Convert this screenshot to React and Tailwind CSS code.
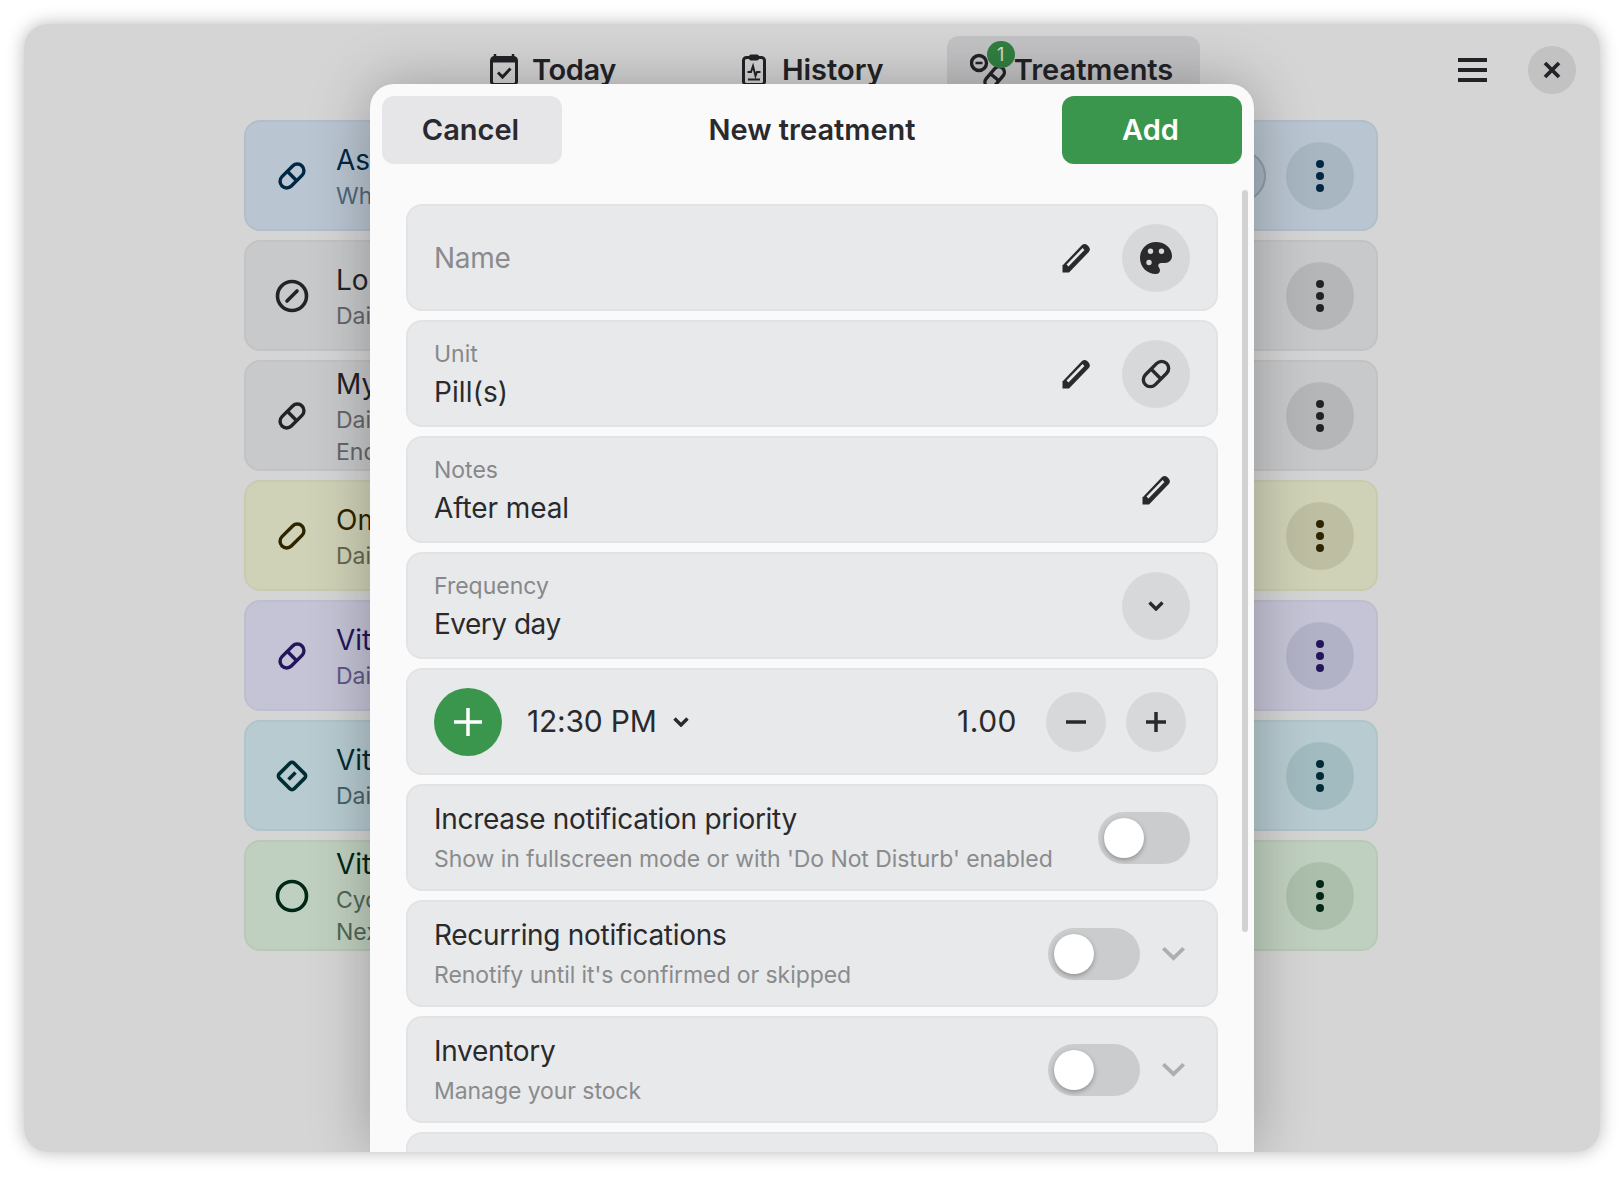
const F = { fontFamily: 'Inter, "Noto Sans", sans-serif' };

function Pill({ size = 36, color = "currentColor", divider = true, sw = 3.6 }) {
  return (
    <svg width={size} height={size} viewBox="0 0 36 36" fill="none" stroke={color} strokeWidth={sw}>
      <g transform="rotate(-45 18 18)">
        <rect x="3" y="11" width="30" height="14" rx="7" />
        {divider && <line x1="18" y1="11" x2="18" y2="25" />}
      </g>
    </svg>
  );
}

function Pencil() {
  return (
    <svg width="30" height="32" viewBox="0 0 30 32" fill="none">
      <path d="M1.500 30.500 L1.500 23.500 L21 3 Q23.500 0.800 26.200 3 L28 5 Q29.800 7.500 27.800 10 L8 30.500 Z" fill="#2a2a2c" />
      <path d="M6.500 23.500 L22.500 7" stroke="#e8e9eb" strokeWidth="2.600" />
    </svg>
  );
}

function Palette() {
  return (
    <svg width="34" height="34" viewBox="0 0 34 34">
      <path
        fillRule="evenodd"
        fill="#2a2a2c"
        d="M17 1C8 1 1 8 1 17s7 16 16 16c2.400 0 4-1.700 4-3.800 0-1-.4-1.800-.9-2.500-.5-.6-.8-1.200-.8-2 0-1.600 1.200-2.700 2.800-2.700H26c4 0 7-3 7-7C33 7 25.800 1 17 1Zm-5.500 6.500a2.700 2.700 0 1 1 0 5.400 2.700 2.700 0 0 1 0-5.400Zm11 0a2.700 2.700 0 1 1 0 5.400 2.700 2.700 0 0 1 0-5.400ZM10 18.800a2.700 2.700 0 1 1 0 5.400 2.700 2.700 0 0 1 0-5.400Z"
      />
    </svg>
  );
}

function Chevron({ w = 16, h = 10, sw = 3.4, color = "#2a2a2c" }) {
  return (
    <svg width={w} height={h} viewBox="0 0 16 10" fill="none" stroke={color} strokeWidth={sw} preserveAspectRatio="none">
      <path d="M1.500 1.500 L8 8 L14.500 1.500" />
    </svg>
  );
}

function CalendarIcon() {
  return (
    <svg width="28" height="32" viewBox="0 0 28 32" fill="none">
      <path d="M5 0v4M23 0v4" stroke="#2a2a2e" strokeWidth="2.500" />
      <rect x="1.500" y="3.500" width="25" height="27" rx="3" stroke="#2a2a2e" strokeWidth="3" />
      <rect x="1.500" y="3.500" width="25" height="5" fill="#2a2a2e" />
      <path d="M8 18.500 L12.500 23 L20.500 14.500" stroke="#2a2a2e" strokeWidth="3" />
    </svg>
  );
}

function ClipboardIcon() {
  return (
    <svg width="24" height="32" viewBox="0 0 24 32" fill="none">
      <rect x="1.500" y="3.500" width="21" height="27" rx="3" stroke="#2a2a2e" strokeWidth="3" />
      <rect x="7" y="0.500" width="10" height="6" rx="2" fill="#2a2a2e" />
      <path d="M5.500 18H9l2-6 2.500 10 1.500-4h3.500M6 25.500h12" stroke="#2a2a2e" strokeWidth="2" />
    </svg>
  );
}

function TreatmentsIcon() {
  return (
    <svg width="36" height="36" viewBox="0 0 36 36" fill="none" stroke="#2a2a2e" strokeWidth="3.400">
      <circle cx="9" cy="11" r="7.500" />
      <path d="M5.500 11h7" strokeWidth="2.400" />
      <g transform="rotate(-50 24 26)">
        <rect x="13" y="20.500" width="24" height="11" rx="5.500" />
        <line x1="25" y1="20.500" x2="25" y2="31.500" />
      </g>
    </svg>
  );
}

function Hamburger() {
  return (
    <div className="flex h-6 w-[29px] flex-col justify-between">
      <div className="h-[4px] bg-[#2a2a2e]" />
      <div className="h-[4px] bg-[#2a2a2e]" />
      <div className="h-[4px] bg-[#2a2a2e]" />
    </div>
  );
}

function Dots({ color }) {
  return (
    <svg width="10" height="34" viewBox="0 0 10 34" fill={color}>
      <circle cx="5" cy="5" r="4" />
      <circle cx="5" cy="17" r="4" />
      <circle cx="5" cy="29" r="4" />
    </svg>
  );
}

const cards = [
  { bg: "bg-[#dae8f6]", border: "border-[#d2e0ee]", dot: "bg-[#c6d6e4]", fg: "#002f52", sub: "text-[#5d7a90]", icon: "pill", title: "Aspirin", lines: ["When necessary"], taken: true },
  { bg: "bg-[#ecedef]", border: "border-[#e4e5e7]", dot: "bg-[#d5d6d8]", fg: "#2a2a2e", sub: "text-[#77787c]", icon: "ban", title: "Loratadine", lines: ["Daily"] },
  { bg: "bg-[#ecedef]", border: "border-[#e4e5e7]", dot: "bg-[#d5d6d8]", fg: "#2a2a2e", sub: "text-[#77787c]", icon: "pill", title: "My pill", lines: ["Daily", "Ends soon"] },
  { bg: "bg-[#f5f7d8]", border: "border-[#edefd0]", dot: "bg-[#dee0bf]", fg: "#352c00", sub: "text-[#7b7a5c]", icon: "capsule", title: "Omega 3", lines: ["Daily"] },
  { bg: "bg-[#e7e7fc]", border: "border-[#dfe0f4]", dot: "bg-[#d2d2ea]", fg: "#2a1a6c", sub: "text-[#71689f]", icon: "pill", title: "Vitamin B", lines: ["Daily"] },
  { bg: "bg-[#d7eff5]", border: "border-[#cfe7ed]", dot: "bg-[#bfdce2]", fg: "#00363d", sub: "text-[#557479]", icon: "diamond", title: "Vitamin C", lines: ["Daily"] },
  { bg: "bg-[#e2f5e2]", border: "border-[#daedda]", dot: "bg-[#c9e1ca]", fg: "#00301a", sub: "text-[#5c7a65]", icon: "ring", title: "Vitamin D", lines: ["Cycle", "Next"] },
];

function CardIcon({ kind, color }) {
  if (kind === "pill") return <Pill color={color} size={34} />;
  if (kind === "capsule") return <Pill color={color} size={34} divider={false} />;
  if (kind === "ban")
    return (
      <svg width="34" height="34" viewBox="0 0 34 34" fill="none" stroke={color} strokeWidth="3.600">
        <circle cx="17" cy="17" r="14.500" />
        <path d="M12 22 L22 12" strokeLinecap="round" />
      </svg>
    );
  if (kind === "diamond")
    return (
      <svg width="34" height="34" viewBox="0 0 34 34" fill="none" stroke={color} strokeWidth="3.600">
        <rect x="6.500" y="6.500" width="21" height="21" rx="3" transform="rotate(45 17 17)" />
        <path d="M13.500 20.500 L20.500 13.500" />
      </svg>
    );
  return (
    <svg width="34" height="34" viewBox="0 0 34 34" fill="none" stroke={color} strokeWidth="3.600">
      <circle cx="17" cy="17" r="14.500" />
    </svg>
  );
}

function Card({ c }) {
  return (
    <div className={`flex h-[111px] shrink-0 items-center rounded-[16px] border-2 pl-[29px] pr-[22px] ${c.bg} ${c.border}`}>
      <CardIcon kind={c.icon} color={c.fg} />
      <div className="ml-[27px] flex min-w-0 flex-1 flex-col pt-[2px]">
        <div className="mb-[2px] text-[28px] leading-[36px]" style={{ color: c.fg }}>{c.title}</div>
        {c.lines.map((l) => (
          <div key={l} className={`text-[23px] leading-[32px] ${c.sub}`}>{l}</div>
        ))}
      </div>
      {c.taken && <div className={`mr-5 h-[52px] w-[52px] rounded-full border-2 border-[#a9bac8] ${c.dot}`} />}
      <div className={`flex h-[68px] w-[68px] items-center justify-center rounded-full ${c.dot}`}>
        <Dots color={c.fg} />
      </div>
    </div>
  );
}

function Row({ children }) {
  return (
    <div className="flex h-[107px] shrink-0 items-center rounded-[16px] border-2 border-[#e2e3e5] bg-[#e8e9eb] pl-[26px] pr-[26px]">
      {children}
    </div>
  );
}

function Circle({ children, size = "h-[68px] w-[68px]", bg = "bg-[#d7d8da]" }) {
  return <div className={`flex shrink-0 items-center justify-center rounded-full ${size} ${bg}`}>{children}</div>;
}

function Field({ label, value, track }) {
  return (
    <div className="flex min-w-0 flex-1 flex-col pt-[3px]">
      <div className="text-[23px] leading-[30px] text-[#87888a]">{label}</div>
      <div className={`mt-[3px] text-[28px] leading-[40px] text-[#2a2a2c] ${track}`}>{value}</div>
    </div>
  );
}

function Toggle() {
  return (
    <div className="relative h-[52px] w-[92px] shrink-0 rounded-full bg-[#cbccce]">
      <div className="absolute left-[6px] top-[6px] h-[40px] w-[40px] rounded-full bg-white shadow-[0_2px_5px_rgba(0,0,0,0.3)]" />
    </div>
  );
}

function SwitchRow({ title, sub, chevron }) {
  return (
    <Row>
      <div className="mb-[2px] flex min-w-0 flex-1 flex-col">
        <div className="text-[28px] leading-[40px] tracking-[-0.3px] text-[#2a2a2c]">{title}</div>
        <div className="mt-[4px] text-[23px] leading-[32px] tracking-[-0.07px] text-[#8a8b8d]">{sub}</div>
      </div>
      <Toggle />
      {chevron && (
        <div className="ml-[20px] mr-[4px] flex w-[26px] justify-center">
          <Chevron w={25} h={15} sw={2.500} color="#adaeb0" />
        </div>
      )}
    </Row>
  );
}

export default function App() {
  return (
    <div className="h-[1180px] w-[1624px] bg-white p-6" style={F}>
      <div className="relative h-[1128px] overflow-hidden rounded-[24px] bg-[#fbfbfb] shadow-[0_0_18px_rgba(0,0,0,0.28)]">
        <div className="flex items-center pl-[443px] pr-6 pt-3">
          <div className="flex h-[68px] items-center gap-[14px] px-[23px]">
            <CalendarIcon />
            <span className="text-[29px] font-semibold tracking-[-0.4px] text-[#2a2a2e]">Today</span>
          </div>
          <div className="ml-[80px] flex h-[68px] items-center gap-[16px] px-[23px]">
            <ClipboardIcon />
            <span className="text-[29px] font-semibold text-[#2a2a2e]">History</span>
          </div>
          <div className="relative ml-[40px] flex h-[68px] w-[253px] items-center rounded-[12px] bg-[#e5e5e8] pl-[23px]">
            <TreatmentsIcon />
            <span className="ml-[8px] text-[29px] font-semibold text-[#2a2a2e]">Treatments</span>
            <div className="absolute left-[40px] top-[5px] flex h-[27px] w-[28px] items-center justify-center rounded-full bg-[#3a964c] text-[18px] text-white">1</div>
          </div>
          <div className="ml-auto mr-[41px]"><Hamburger /></div>
          <div className="flex h-[48px] w-[48px] items-center justify-center rounded-full bg-[#e4e4e6]">
            <svg width="20" height="20" viewBox="0 0 20 20" stroke="#2a2a2e" strokeWidth="3.800" fill="none">
              <path d="M3 3 L17 17 M17 3 L3 17" />
            </svg>
          </div>
        </div>

        <div className="ml-[220px] mr-[222px] mt-4 flex flex-col gap-[9px]">
          {cards.map((c) => (
            <Card key={c.title} c={c} />
          ))}
        </div>

        <div className="absolute inset-0 bg-black/15" />

        <div className="absolute bottom-0 left-[346px] top-[60px] w-[884px] overflow-hidden rounded-t-[24px] bg-[#fafafa] shadow-[0_0_60px_rgba(0,0,0,0.28)]">
          <div className="flex items-center justify-between px-3 pt-3">
            <div className="flex h-[68px] w-[180px] items-center justify-center rounded-[12px] bg-[#e6e6e8] pr-[3px] text-[29px] font-semibold text-[#2a2a2e]">Cancel</div>
            <div className="text-[29px] font-semibold text-[#2a2a2e]">New treatment</div>
            <div className="flex h-[68px] w-[180px] items-center justify-center rounded-[12px] bg-[#3a964c] pr-[3px] text-[29px] font-semibold text-white">Add</div>
          </div>

          <div className="absolute right-[6px] top-[106px] h-[742px] w-[6px] rounded-full bg-[#d2d2d4]" />

          <div className="ml-[36px] mr-[36px] mt-10 flex flex-col gap-[9px]">
            <Row>
              <div className="min-w-0 flex-1 text-[28px] tracking-[-0.3px] text-[#8a8b8d]">Name</div>
              <Pencil />
              <div className="ml-[31px]"><Circle><Palette /></Circle></div>
            </Row>
            <Row>
              <Field label="Unit" value="Pill(s)" track="tracking-[0.1px]" />
              <Pencil />
              <div className="ml-[31px]"><Circle><Pill size={36} color="#2a2a2c" sw={3.400} /></Circle></div>
            </Row>
            <Row>
              <Field label="Notes" value="After meal" track="tracking-[-0.1px]" />
              <div className="mr-[19px]"><Pencil /></div>
            </Row>
            <Row>
              <Field label="Frequency" value="Every day" track="tracking-[-0.5px]" />
              <Circle><Chevron /></Circle>
            </Row>
            <Row>
              <Circle bg="bg-[#3a964c]">
                <svg width="30" height="30" viewBox="0 0 30 30" stroke="#ffffff" strokeWidth="3.500">
                  <path d="M15 1v28M1 15h28" />
                </svg>
              </Circle>
              <span className="ml-[25px] text-[30px] tracking-[-0.2px] text-[#2a2a2c]">12:30 PM</span>
              <div className="ml-[16px]"><Chevron /></div>
              <span className="ml-auto mr-[29px] text-[30px] tracking-[0.5px] text-[#2a2a2c]">1.00</span>
              <Circle size="h-[60px] w-[60px]">
                <svg width="20" height="20" viewBox="0 0 20 20" stroke="#2a2a2c" strokeWidth="3.500"><path d="M0 10h20" /></svg>
              </Circle>
              <div className="ml-[20px] mr-[4px]">
                <Circle size="h-[60px] w-[60px]">
                  <svg width="20" height="20" viewBox="0 0 20 20" stroke="#2a2a2c" strokeWidth="3.500"><path d="M0 10h20M10 0v20" /></svg>
                </Circle>
              </div>
            </Row>
            <SwitchRow title="Increase notification priority" sub="Show in fullscreen mode or with 'Do Not Disturb' enabled" />
            <SwitchRow title="Recurring notifications" sub="Renotify until it's confirmed or skipped" chevron />
            <SwitchRow title="Inventory" sub="Manage your stock" chevron />
            <Row><div /></Row>
          </div>
        </div>
      </div>
    </div>
  );
}
